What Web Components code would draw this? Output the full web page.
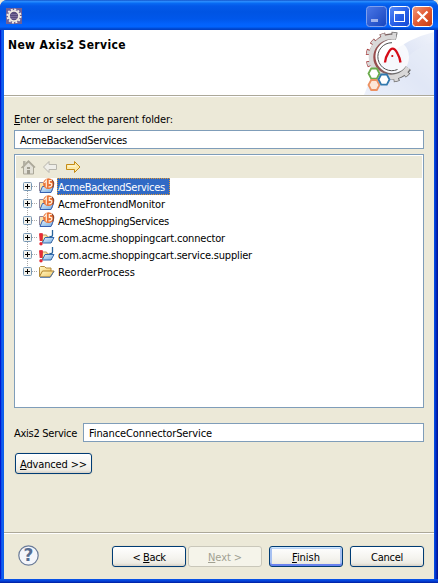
<!DOCTYPE html>
<html lang="en"><head><meta charset="utf-8"><title>New Axis2 Service</title>
<style>html,body{margin:0;width:438px;height:583px;overflow:hidden;background:#ece9d8}</style></head><body>
<wizard-window></wizard-window>
<script>
const define=(name,html,ready)=>customElements.define(name,class extends HTMLElement{
  constructor(){super();const t=document.createElement('template');t.innerHTML=html;this.attachShadow({mode:'open'}).append(t.content.cloneNode(true));}
  connectedCallback(){if(ready)ready(this,this.shadowRoot);}
});

/* Text run whose tracking is adjusted so that it spans the given width. */
define('fit-text','<style>:host{display:inline-block;white-space:pre;flex:none;padding-top:2px}span{display:inline-block}</style><span><slot></slot></span>',(h,r)=>{
  const w=+h.getAttribute('w'),n=h.textContent.length,s=r.querySelector('span');
  h.style.width=w+'px';
  s.style.letterSpacing=((w-s.getBoundingClientRect().width)/n)+'px';
});

define('title-button',`<style>:host{display:block;width:21px;height:21px}svg{display:block}.d{display:none}
:host([kind=min]) .min,:host([kind=max]) .max,:host([kind=close]) .close{display:block}</style>
<svg class="d min" width="21" height="21"><defs><linearGradient id="a" x2="1" y2="1"><stop stop-color="#4a78e8"/><stop offset="1" stop-color="#1744bd"/></linearGradient></defs><rect x=".5" y=".5" width="20" height="20" rx="3" fill="url(#a)" stroke="#7f9fec"/><path d="M5 13h7v3H5z" fill="#9fb3ec"/></svg>
<svg class="d max" width="21" height="21"><defs><linearGradient id="b" x2="1" y2="1"><stop stop-color="#5b8df7"/><stop offset=".5" stop-color="#2a61e8"/><stop offset="1" stop-color="#1448d4"/></linearGradient></defs><rect x=".5" y=".5" width="20" height="20" rx="3" fill="url(#b)" stroke="#fff"/><path d="M5 5h11v11H5zM6 8v7h9V8z" fill="#fff" fill-rule="evenodd"/></svg>
<svg class="d close" width="21" height="21"><defs><linearGradient id="c" x2="1" y2="1"><stop stop-color="#f09a7c"/><stop offset=".5" stop-color="#e25a33"/><stop offset="1" stop-color="#c63c10"/></linearGradient></defs><rect x=".5" y=".5" width="20" height="20" rx="3" fill="url(#c)" stroke="#fff"/><path d="M5.500 5.500l10 10m0-10l-10 10" stroke="#fff" stroke-width="2.300"/></svg>`);

define('title-bar',`<style>:host{display:flex;height:30px;box-sizing:border-box;padding:6px 5px 0 6px;align-items:flex-start;border-radius:6px 6px 0 0;
background:linear-gradient(#0845ba 0,#2f88fb 1px,#238afd 2px,#096cf4 3px,#0359e9 6px,#0054e3 12px,#0057ea 19px,#0262fc 24px,#0264fe 27px,#0050dd 28px,#003dc0 30px)}
.ic{margin-top:2px;display:block}.sp{flex:1}title-button+title-button{margin-left:2px}</style>
<svg class="ic" width="16" height="16"><rect width="16" height="16" fill="#6e6096"/><circle cx="8" cy="8" r="6.600" fill="none" stroke="#f3eee6" stroke-width="1.800" stroke-dasharray="2 1.456"/><circle cx="8" cy="8" r="5.100" fill="#574c7c" stroke="#f0ebe2" stroke-width="1.900"/><path d="M4.500 6.500h7M4 8.500h8M5 10.500h6" stroke="#796b9a"/></svg>
<span class="sp"></span><title-button kind="min"></title-button><title-button kind="max"></title-button><title-button kind="close"></title-button>`);

define('wizard-header',`<style>:host{display:flex;justify-content:space-between;background:#fff;height:65px;border-bottom:1px solid #aca899;box-shadow:0 1px #fff;color:#000;font-weight:bold;font-size:12px}
fit-text{margin:6px 0 0 4px;line-height:15px;height:15px}svg{display:block}</style>
<fit-text w="118">New Axis2 Service</fit-text>
<svg width="74" height="65" viewBox="360 30 74 65"><defs><linearGradient id="g" x1="0" y1="1" x2="1" y2="0"><stop stop-color="#edf1fb"/><stop offset=".5" stop-color="#d8e0f3"/><stop offset="1" stop-color="#f0f3fb"/></linearGradient><linearGradient id="r" gradientUnits="userSpaceOnUse" x1="366" y1="0" x2="412" y2="0"><stop stop-color="#a83838"/><stop offset=".35" stop-color="#8a5c5c"/><stop offset=".6" stop-color="#6c6c6c"/></linearGradient></defs>
<path d="M364 95Q381 45 434 32V95z" fill="url(#g)"/><path d="M395 75Q405 51 434 42V95H374Q390 89 395 75z" fill="#e8edf8" opacity=".55"/>
<circle cx="391" cy="57" r="18" fill="#fff" opacity=".75"/>
<g fill="none"><g stroke="url(#r)"><path d="M396.600 36.900A20 20 0 1 0 408.400 68.200" stroke-width="6.400"/><path d="M397 34.800A23 23 0 1 0 410.500 69.200" stroke-width="4.600" stroke-dasharray="5.600 5.900"/></g>
<g stroke="#d9d8d8"><path d="M396 37.700A20 20 0 1 0 408 67.600" stroke-width="4.600"/><path d="M396.200 34.700A23 23 0 1 0 410.500 69.200" stroke-width="3.400" stroke-dasharray="4 7.500"/></g>
<path d="M392 42.700A14 14 0 1 0 397.500 69.500" stroke="#505050"/></g>
<path d="M385 62.500Q385.500 57 388 53.500Q390.500 48.700 392.500 48.700Q395 48.700 397.500 53.500Q400 58 400.500 62.500" fill="none" stroke="#d50b17" stroke-width="2.300"/><circle cx="392.300" cy="56" r="1.100" fill="#c00"/>
<g fill="#fff" stroke-width="1.800"><path d="M368.500 73.500l2.700-5h5.600l2.700 5-2.700 5.200h-5.600z" stroke="#6cac4e"/><path d="M368.500 85l2.700-5h5.600l2.700 5-2.700 5h-5.600z" fill="#fce6d7" stroke="#ec9162"/><path d="M378.500 79.500l2.700-5h5.600l2.700 5-2.700 5.200h-5.600z" stroke="#3178ae"/></g></svg>`);

define('text-field',`<style>:host{display:flex;box-sizing:border-box;height:19px;border:1px solid #7f9db9;background:#fff;padding-left:5px;align-items:center}</style><slot></slot>`);

define('push-button',`<style>:host{display:flex;box-sizing:border-box;width:74px;height:21px;border:1px solid #003c74;border-radius:3px;justify-content:center;align-items:center;background:linear-gradient(#fff,#f4f3ee 60%,#edebe3 85%,#d6d0c5);color:#000;box-shadow:0 0 0 1px #e5e1d0}
:host([default]){box-shadow:inset 0 1px #cee7ff,inset 0 -2px #6982ee,inset 2px 0 #a6c0f1,inset -2px 0 #a6c0f1,inset 0 2px #bcd4f6}
:host([disabled]){background:#f5f4ea;border-color:#c9c7ba;color:#a1a192;box-shadow:none}</style><slot></slot>`);

define('tree-toolbar',`<style>:host{display:flex;height:22px;background:#ece9d8;gap:6px;padding-left:4px;align-items:center}svg{display:block}</style>
<svg width="16" height="16"><path d="M3.500 8v7h10V8l-5-5z" fill="#e3e1d7" stroke="#aaa798"/><path d="M1.500 9L8.500 2L15 8.500" fill="none" stroke="#aaa798" stroke-width="1.500"/><path d="M3 2h2.500v3L3 7z" fill="#b4b1a4"/><path d="M7 8h3v2H7zM7 11h3v4H7z" fill="#a09d90"/></svg>
<svg width="17" height="16"><path d="M1.500 8L7 2.500V5.500H14.500V10.500H7V13.500z" fill="#efeee9" stroke="#b7b5ac" stroke-linejoin="round"/></svg>
<svg width="17" height="16"><path d="M15 8L9.500 2.500V5.500H1.500V10.500H9.500V13.500z" fill="#fce9a7" stroke="#c58b15" stroke-linejoin="round"/><path d="M3 7h8" stroke="#fffbe1"/></svg>`);

define('tree-row',`<style>:host{display:flex;height:17px;align-items:center}.x{display:block;flex:none}.y{margin-left:-12px}.l{display:flex;align-items:center;height:17px;box-sizing:border-box;padding:0 3px 0 1px;margin-left:2px}
:host([selected]) .l{background:#316ac5;color:#fff;outline:1px dotted #e39a35;outline-offset:-1px;padding-right:5px}.k{display:none}:host([kind=web]) .web,:host([kind=java]) .java,:host([kind=folder]) .folder{display:block}
:host([last]) .down{display:none}:host([first]) .up{display:none}</style>
<svg class="x" width="34" height="17"><g stroke="#aaa" stroke-dasharray="1 1"><path class="up" d="M11.500 0v4"/><path class="down" d="M11.500 13v4"/><path d="M16 8.500h6"/></g><rect x="7.500" y="4.500" width="8" height="8" rx="1" fill="#f4f3ed" stroke="#7898b5"/><path d="M9 8.500h5M11.500 6v5" stroke="#000"/></svg>
<svg class="x y" width="17" height="17">
<defs><linearGradient id="y" x2="1" y2="1"><stop stop-color="#fff8c9"/><stop offset="1" stop-color="#f1c55e"/></linearGradient><linearGradient id="u" x2="1" y2="1"><stop stop-color="#e2f1ff"/><stop offset="1" stop-color="#75acdf"/></linearGradient></defs>
<g class="k web"><path d="M1.500 13V4.500H5l1.500 1.500H14v7z" fill="#f8e2ad" stroke="#8c86a0"/><path d="M2 14.500L4.500 8.500H15.500L13 14.500z" fill="url(#u)" stroke="#3761b2"/><circle cx="10.500" cy="5.700" r="5.400" fill="#ea7437"/><path d="M14 1.800Q17 5 14.500 9.500" fill="none" stroke="#8c452f" stroke-width="1.200"/><path d="M6.300 5L8.300 2.500V9.500M13.800 2.500H11.300V5.500Q14 5 13.800 7Q13.500 9 10.500 8.800" fill="none" stroke="#fff0dd" stroke-width="1.200"/></g>
<g class="k java"><path d="M4.500 14V6h4l1 2h4v6" fill="url(#y)" stroke="#bd9252"/><path d="M4.500 13.500L7 8.500h9l-3 5.500H4.500z" fill="url(#u)" stroke="#356aae"/><path d="M14.500 1v5q0 2-3 1.500" fill="none" stroke="#29649c" stroke-width="1.300"/><path d="M1 4.500Q3 3.500 5 4.500L4.300 12H1.700z" fill="#e52b37"/><circle cx="3" cy="14.700" r="1.700" fill="#e52b37"/></g>
<g class="k folder"><path d="M1.500 13V4.500l1-1h4l1.500 1.500h5v3" fill="url(#y)" stroke="#b48b3e"/><path d="M1.500 13.500L4.500 8H16l-3.500 6H2z" fill="url(#y)" stroke="#b28125"/><path d="M2 14.300h10l4-6" fill="none" stroke="#4c76b5"/></g></svg>
<span class="l"><slot></slot></span>`);

define('folder-tree',`<style>:host{display:block;box-sizing:border-box;height:254px;border:1px solid #7f9db9;background:#fff;padding:1px}</style><tree-toolbar></tree-toolbar><slot></slot>`);

define('help-button',`<style>:host{display:block;width:21px;height:21px;color:#566d91;position:relative;font:bold 17px/21px "DejaVu Sans",sans-serif}svg{display:block}span{position:absolute;inset:0;text-align:center}</style><svg width="21" height="21"><circle cx="10.500" cy="10.500" r="9.700" fill="#f4f6fb" stroke="#6a7b98" stroke-width="1.200"/></svg><span>?</span>`);

define('wizard-window',`<style>:host{display:flex;flex-direction:column;width:438px;height:583px;box-sizing:border-box;background:linear-gradient(90deg,#0019cf 0,#0019cf 1px,#0b49e5 1px,#1167f5 3px,#0855dd 4px,#0855dd 434px,#0440dd 435px,#001ca8 437px,#00138c 438px);font:11px/15px "DejaVu Sans Condensed","DejaVu Sans",sans-serif;font-stretch:condensed;color:#000;padding-bottom:4px;position:relative;border-radius:7px 7px 0 0;overflow:hidden}
:host::after{content:"";position:absolute;left:0;right:0;bottom:0;height:4px;background:linear-gradient(#0958eb,#0441d8 50%,#001c9c)}
.c{margin:0 4px;flex:1;background:#ece9d8;display:flex;flex-direction:column}
.m{padding:15px 10px 0;display:flex;flex-direction:column;height:437px;box-sizing:border-box;border-bottom:1px solid #aca899;box-shadow:0 1px #fff}
.lab{height:19px;box-sizing:border-box;padding-bottom:4px;display:flex;align-items:center}folder-tree{margin-top:5px}.svc{display:flex;align-items:center;margin-top:15px}.svc text-field{flex:1;margin-left:6px}
.adv{width:77px;margin:11px 0 0 1px}.f{display:flex;align-items:flex-start;padding:13px 10px 0 14px}.f help-button{margin:-1px 73px 0 0}.f push-button{margin-right:2px}.f push-button[disabled]{margin-right:7px}.f push-button[default]{margin-right:7px}.f push-button:last-child{margin:0}</style>
<title-bar></title-bar><div class="c"><wizard-header></wizard-header>
<div class="m"><div class="lab"><fit-text w="159"><u>E</u>nter or select the parent folder:</fit-text></div>
<text-field><fit-text w="107">AcmeBackendServices</fit-text></text-field>
<folder-tree><tree-row kind="web" selected first><fit-text w="107">AcmeBackendServices</fit-text></tree-row><tree-row kind="web"><fit-text w="107">AcmeFrontendMonitor</fit-text></tree-row><tree-row kind="web"><fit-text w="111">AcmeShoppingServices</fit-text></tree-row><tree-row kind="java"><fit-text w="167">com.acme.shoppingcart.connector</fit-text></tree-row><tree-row kind="java"><fit-text w="194">com.acme.shoppingcart.service.supplier</fit-text></tree-row><tree-row kind="folder" last><fit-text w="77">ReorderProcess</fit-text></tree-row></folder-tree>
<div class="svc"><fit-text w="63">Axis2 Service</fit-text><text-field><fit-text w="123">FinanceConnectorService</fit-text></text-field></div>
<push-button class="adv"><fit-text w="67"><u>A</u>dvanced &gt;&gt;</fit-text></push-button></div>
<div class="f"><help-button></help-button><push-button><fit-text w="33">&lt; <u>B</u>ack</fit-text></push-button><push-button disabled><fit-text w="34"><u>N</u>ext &gt;</fit-text></push-button><push-button default><fit-text w="28"><u>F</u>inish</fit-text></push-button><push-button><fit-text w="32">Cancel</fit-text></push-button></div></div>`);
</script></body></html>
